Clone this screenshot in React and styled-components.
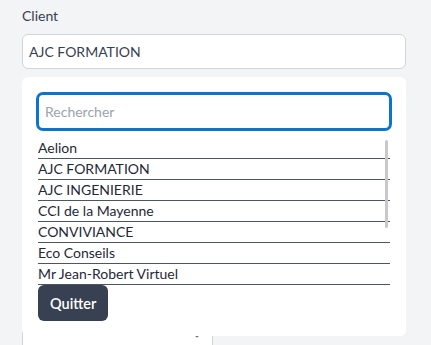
import React, { useState } from 'react';
import styled, { createGlobalStyle } from 'styled-components';

const clients = [
  'Aelion',
  'AJC FORMATION',
  'AJC INGENIERIE',
  'CCI de la Mayenne',
  'CONVIVIANCE',
  'Eco Conseils',
  'Mr Jean-Robert Virtuel',
];

const App = () => {
  const [query, setQuery] = useState('');
  const visible = clients.filter((c) => c.toLowerCase().includes(query.toLowerCase()));

  return (
    <>
      <GlobalStyle />
      <Page>
        <Field>
          <Label>Client</Label>
          <Picker>
            <Selected>AJC FORMATION</Selected>
            <Dropdown>
              <Search
                autoFocus
                placeholder="Rechercher"
                value={query}
                onChange={(e) => setQuery(e.target.value)}
              />
              <ListWrap>
                <List>
                  {visible.map((c) => (
                    <Item key={c}>{c}</Item>
                  ))}
                </List>
                <Thumb />
              </ListWrap>
              <QuitButton>Quitter</QuitButton>
            </Dropdown>
          </Picker>
        </Field>
        <NextField>
          <Chevrons width="10" height="14" viewBox="0 0 10 14">
            <path d="M2 5 L5 2 L8 5 M2 9 L5 12 L8 9" fill="none" stroke="#6b7280" strokeWidth="1.2" />
          </Chevrons>
        </NextField>
      </Page>
    </>
  );
};

const GlobalStyle = createGlobalStyle`
  html, body {
    margin: 0;
    background: #f3f4f6;
    font-family: Lato, "Noto Sans", sans-serif;
    overflow: hidden;
  }
`;

const Page = styled.div`
  width: 384px;
  padding: 6px 25px 0 22px;
  height: 345px;
  box-sizing: content-box;
`;

const Field = styled.div`
  display: flex;
  flex-direction: column;
`;

const Label = styled.label`
  font-size: 14px;
  line-height: 20px;
  color: #374151;
  margin-bottom: 8px;
`;

const Picker = styled.div`
  position: relative;
`;

const Selected = styled.div`
  height: 35px;
  box-sizing: border-box;
  display: flex;
  align-items: center;
  padding: 0 6px;
  background: #fff;
  border: 1px solid #d1d5db;
  border-radius: 6px;
  font-size: 14px;
  color: #374151;
`;

const Dropdown = styled.div`
  position: absolute;
  top: 43px;
  left: 0;
  right: 0;
  z-index: 10;
  background: #fff;
  border-radius: 6px;
  padding: 15px 14px 15px;
  display: flex;
  flex-direction: column;
  align-items: flex-start;
`;

const Search = styled.input`
  width: 100%;
  height: 39px;
  box-sizing: border-box;
  border: 3px solid #0b74cf;
  border-radius: 7px;
  padding: 0 6px;
  font-family: inherit;
  font-size: 14px;
  color: #1f2937;
  outline: none;

  &::placeholder {
    color: #9ca3af;
  }
`;

const ListWrap = styled.div`
  position: relative;
  align-self: stretch;
  margin: 7px 2px 0;
`;

const List = styled.ul`
  list-style: none;
  margin: 0;
  padding: 0;
  max-height: 148px;
  overflow: hidden;
`;

const Item = styled.li`
  font-size: 14px;
  line-height: 20px;
  color: #1f2937;
  border-bottom: 1px solid #4b5563;
`;

const Thumb = styled.div`
  position: absolute;
  top: 2px;
  right: 2px;
  width: 3px;
  height: 88px;
  border-radius: 2px;
  background: #c8c8cc;
`;

const QuitButton = styled.button`
  margin: 0 0 0 2px;
  height: 36px;
  padding: 0 12px;
  border: none;
  border-radius: 6px;
  background: #374151;
  color: #fff;
  font-family: Lato, sans-serif;
  font-size: 14.5px;
  font-weight: 600;
`;

const NextField = styled.div`
  margin-top: 250px;
  width: 191px;
  height: 36px;
  box-sizing: border-box;
  background: #fff;
  border: 1px solid #d1d5db;
  border-radius: 6px;
  display: flex;
  justify-content: flex-end;
  align-items: flex-start;
  padding: 5px 10px 0 0;
`;

const Chevrons = styled.svg`
  display: block;
`;

export default App;
